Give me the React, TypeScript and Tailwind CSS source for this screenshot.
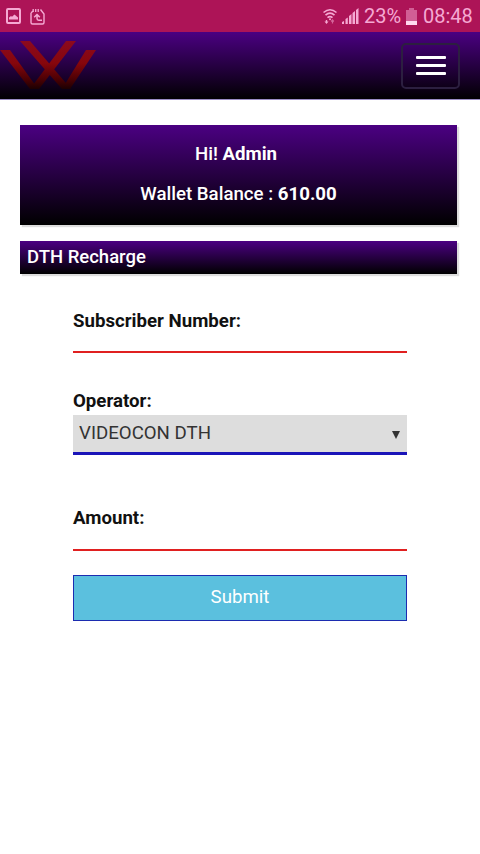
import { useState } from 'react'

function StatusBar() {
  return (
    <div className="flex h-8 items-center justify-between bg-[#ad1457] pl-[6px] pr-[7px] text-[#f5a9d3]">
      <div className="flex items-center gap-[9px]">
        <svg width="15" height="16" viewBox="0 0 15 16" fill="none">
          <rect x="1" y="1" width="13" height="14" rx="1" stroke="currentColor" strokeWidth="2" />
          <path d="M3 11.500V9.500l2-1.500 1 .8L8.500 6.500l3.500 3v2z" fill="currentColor" />
        </svg>
        <svg width="15" height="17" viewBox="0 0 15 17" fill="none" stroke="currentColor">
          <path d="M1 5v9.500q0 1.500 1.500 1.500h10q1.500 0 1.500-1.500V6L10.500 1.500M1 5l2-2" strokeWidth="1.400" />
          <path d="M3.200 1v3M5.700 1v3M8.200 1v3" strokeWidth="1.300" />
          <path d="M4.200 9.300L7 6.500l2.800 2.800M7 7v3.500q0 1.700 1.700 1.700H12" strokeWidth="1.500" />
        </svg>
      </div>
      <div className="flex items-center">
        <svg width="14" height="17" viewBox="0 0 14 17" fill="none" stroke="currentColor" className="mr-[5px]">
          <path d="M.5 4.500Q7-1 13.500 4.500M2.500 7.200Q7 3.200 11.500 7.200M4.500 9.700Q7 7.500 9.500 9.700" strokeWidth="1.600" />
          <circle cx="7" cy="11.300" r="1" fill="currentColor" stroke="none" />
          <path d="M3.500 12v2" strokeWidth="1.400" />
          <path d="M1.500 13.500h4l-2 2.500z" fill="currentColor" stroke="none" />
          <path d="M9.500 15.500v-3.500M8.200 13.500l1.300-1.500 1.300 1.500" strokeWidth="1.200" opacity=".55" />
        </svg>
        <svg width="17" height="16" viewBox="0 0 17 16" fill="currentColor" className="mr-[5px]">
          <path d="M0 16v-2l2-1v3zM3.500 16v-5l2.300-1.500V16zM7 16V8l2.500-2v10zM10.500 16V5L13 3v13zM14 16V2l2.500-2v16z" />
        </svg>
        <span className="w-[38px] whitespace-nowrap text-[20px] leading-8">23%</span>
        <svg width="11" height="17" viewBox="0 0 11 17" fill="currentColor" className="ml-[4px] mr-[6px]">
          <path d="M3 0h5v2h3v11H0V2h3z" opacity=".5" />
          <path d="M0 13h11v4H0z" fill="#ffd9ef" />
        </svg>
        <span className="w-[50px] whitespace-nowrap text-[20px] leading-8">08:48</span>
      </div>
    </div>
  )
}

function Logo() {
  return (
    <svg width="98" height="54" viewBox="0 0 98 54" fill="none">
      <defs>
        <linearGradient id="logo" x1="0" y1="0" x2="0" y2="54" gradientUnits="userSpaceOnUse">
          <stop offset="0" stopColor="#8c0a20" />
          <stop offset=".45" stopColor="#86060c" />
          <stop offset=".75" stopColor="#4a0004" />
          <stop offset="1" stopColor="#080001" />
        </linearGradient>
      </defs>
      <g fill="url(#logo)">
        <path d="M0 11h10l28 39h-8z" />
        <path d="M20 2h10l41 48h-9z" />
        <path d="M66 2h10L39 50h-9z" />
        <path d="M86 11h10L70 50h-8z" />
      </g>
    </svg>
  )
}

function Navbar() {
  return (
    <nav className="flex h-[68px] items-center justify-between border-b border-[#9a8cc4] bg-linear-to-b/srgb from-[#4b0082] to-black bg-origin-border pr-5">
      <Logo />
      <button
        aria-label="Menu"
        className="flex h-[46px] w-[59px] flex-col items-center justify-center gap-[5px] rounded-[5px] border-2 border-[#2c1f40]"
      >
        <span className="h-[3px] w-[30px] rounded-[1px] bg-white" />
        <span className="h-[3px] w-[30px] rounded-[1px] bg-white" />
        <span className="h-[3px] w-[30px] rounded-[1px] bg-white" />
      </button>
    </nav>
  )
}

export default function App() {
  const [number, setNumber] = useState('')
  const [amount, setAmount] = useState('')

  return (
    <div className="min-h-screen bg-white font-['Roboto',sans-serif] text-[18.67px] leading-[26px] text-[#111]">
      <StatusBar />
      <Navbar />
      <main className="pl-5 pr-[23px] pt-[25px]">
        {/* Wallet */}
        <section className="h-[100px] bg-linear-to-b/srgb from-[#4b0082] to-black pt-4 text-center font-medium text-white shadow-[2px_2px_1px_#ddd]">
          <p className="pr-[5px]">Hi! <b>Admin</b></p>
          <p className="mt-[14px]">Wallet Balance : <b>610.00</b></p>
        </section>

        <h1 className="mt-4 h-[33px] bg-linear-to-b/srgb from-[#4b0082] to-black pl-[7px] pt-[3px] text-[18.5px] font-medium text-white shadow-[2px_2px_1px_#ddd]">
          DTH Recharge
        </h1>

        {/* Recharge form */}
        <form className="ml-[53px] mt-[34px] flex w-[334px] flex-col" onSubmit={e => e.preventDefault()}>
          <label htmlFor="number" className="font-bold">Subscriber Number:</label>
          <input
            id="number"
            value={number}
            onChange={e => setNumber(e.target.value)}
            className="h-[19px] border-b-2 border-[#e02020] outline-none"
          />

          <label htmlFor="operator" className="mt-[35px] font-bold">Operator:</label>
          <div className="mt-px flex h-10 border-b-[3px] border-[#1a14b8] bg-[#ddd]">
            <select id="operator" className="w-full appearance-none pl-[6px] pb-px text-[#333] outline-none">
              <option>VIDEOCON DTH</option>
            </select>
            <svg width="8" height="8" viewBox="0 0 8 8" className="mr-[7px] mt-4 shrink-0">
              <path d="M0 0h8L4 8z" fill="#333" />
            </svg>
          </div>

          <label htmlFor="amount" className="mt-[50px] font-bold">Amount:</label>
          <input
            id="amount"
            value={amount}
            onChange={e => setAmount(e.target.value)}
            className="h-5 border-b-2 border-[#e02020] outline-none"
          />

          <button className="mt-6 h-[46px] border border-[#1c2cb0] bg-[#5bc0de] pb-[2px] text-white">Submit</button>
        </form>
      </main>
    </div>
  )
}
